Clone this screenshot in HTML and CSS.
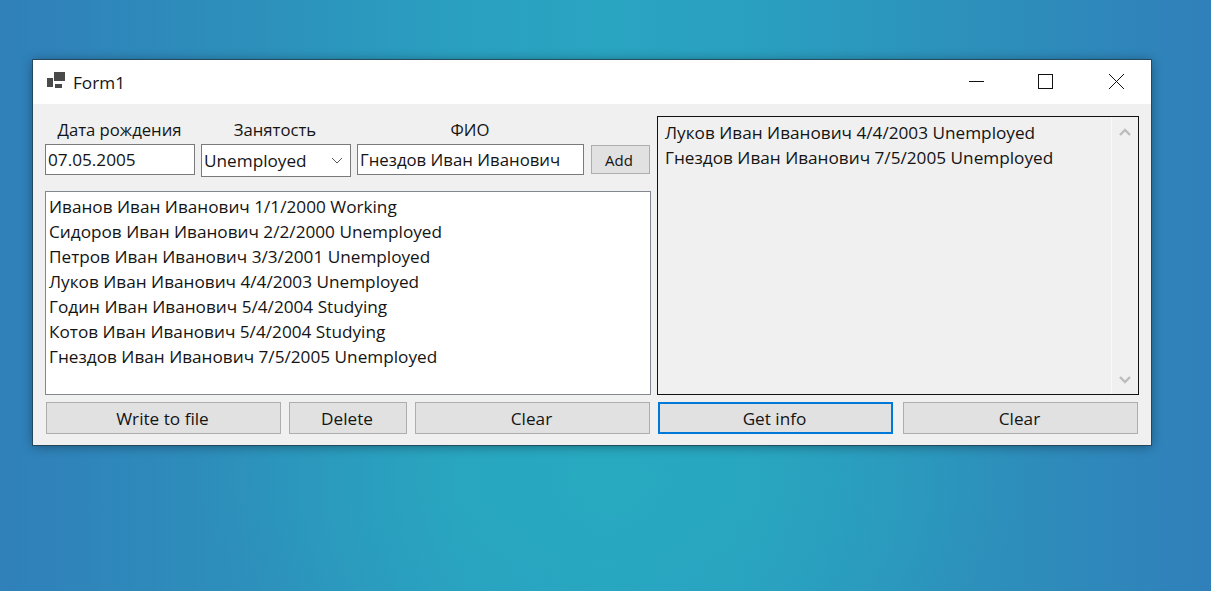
FILE: index.html
```html
<!DOCTYPE html>
<html lang="ru">
<head>
<meta charset="utf-8">
<title>Form1</title>
<link rel="stylesheet" href="styles.css">
</head>
<body>
<main class="window">
  <header class="titlebar">
    <svg class="app-icon" width="18" height="16" viewBox="0 0 18 16" aria-hidden="true">
      <rect x="7" y="0" width="11" height="9" fill="#4a4a4a"/>
      <rect x="0" y="6" width="6" height="9" fill="#4a4a4a"/>
      <rect x="8" y="12" width="7" height="4" fill="#4a4a4a"/>
    </svg>
    <span class="title">Form1</span>
    <div class="controls">
      <svg class="ctl ctl-min" width="16" height="16" viewBox="0 0 16 16" aria-hidden="true"><path d="M0 7.5H15" stroke="#111" fill="none"/></svg>
      <svg class="ctl ctl-max" width="16" height="16" viewBox="0 0 16 16" aria-hidden="true"><rect x="0.5" y="0.5" width="14" height="14" stroke="#111" fill="none"/></svg>
      <svg class="ctl ctl-close" width="16" height="16" viewBox="0 0 16 16" aria-hidden="true"><path d="M0 0L15 15M15 0L0 15" stroke="#111" fill="none"/></svg>
    </div>
  </header>
  <div class="client">
    <section class="left">
      <div class="labels">
        <span class="label label-date">Дата рождения</span>
        <span class="label label-job">Занятость</span>
        <span class="label label-name">ФИО</span>
      </div>
      <div class="inputs">
        <div class="field field-date">07.05.2005</div>
        <div class="field field-combo">Unemployed
          <svg class="chevron" width="12" height="7" viewBox="0 0 12 7" aria-hidden="true"><path d="M1 1L6 6L11 1" stroke="#555" fill="none"/></svg>
        </div>
        <div class="field field-name">Гнездов Иван Иванович</div>
        <div class="btn btn-add">Add</div>
      </div>
      <div class="list">
        <div>Иванов Иван Иванович 1/1/2000 Working</div>
        <div>Сидоров Иван Иванович 2/2/2000 Unemployed</div>
        <div>Петров Иван Иванович 3/3/2001 Unemployed</div>
        <div>Луков Иван Иванович 4/4/2003 Unemployed</div>
        <div>Годин Иван Иванович 5/4/2004 Studying</div>
        <div>Котов Иван Иванович 5/4/2004 Studying</div>
        <div>Гнездов Иван Иванович 7/5/2005 Unemployed</div>
      </div>
      <div class="actions">
        <div class="btn btn-write">Write to file</div>
        <div class="btn btn-delete">Delete</div>
        <div class="btn btn-clear">Clear</div>
      </div>
    </section>
    <section class="right">
      <div class="info">
        <div class="info-text">
          <div>Луков Иван Иванович 4/4/2003 Unemployed</div>
          <div>Гнездов Иван Иванович 7/5/2005 Unemployed</div>
        </div>
        <div class="scrollbar">
          <svg width="12" height="8" viewBox="0 0 12 8" aria-hidden="true"><path d="M1 7L6 2L11 7" stroke="#bcbcbc" stroke-width="2.4" fill="none"/></svg>
          <svg width="12" height="8" viewBox="0 0 12 8" aria-hidden="true"><path d="M1 1L6 6L11 1" stroke="#bcbcbc" stroke-width="2.4" fill="none"/></svg>
        </div>
      </div>
      <div class="actions actions-right">
        <div class="btn btn-focus">Get info</div>
        <div class="btn btn-half">Clear</div>
      </div>
    </section>
  </div>
</main>
</body>
</html>
```
FILE: styles.css
```css
html, body { height: 100%; }
body {
  margin: 0;
  overflow: hidden;
  font-family: "Open Sans", "Noto Sans", sans-serif;
  font-size: 17.2px;
  color: #141414;
  background:
    radial-gradient(ellipse 420px 200px at 610px 480px, rgba(38, 176, 192, 0.55) 0%, rgba(38, 176, 192, 0) 100%),
    linear-gradient(90deg, #3080ba 0%, #2d8fbb 20%, #2aa0c0 38%, #29a4c1 50%, #2aa0c0 62%, #2d8fbb 82%, #3080ba 100%);
  background-color: #2f80ba;
}
.window {
  width: 1118px;
  height: 385px;
  margin: 60px 0 0 33px;
  display: flex;
  flex-direction: column;
  background: #f0f0f0;
  box-shadow: 0 0 0 1px rgba(35, 60, 75, 0.75), 0 1px 11px rgba(0, 0, 0, 0.4);
}
.titlebar {
  height: 44px;
  display: flex;
  align-items: center;
  padding-left: 14px;
  background: #fff;
  flex: none;
}
.app-icon { flex: none; margin-top: -4px; }
.title { margin-left: 8px; }
.controls { margin-left: auto; display: flex; align-items: center; }
.ctl { display: block; margin-top: -1px; }
.ctl-min { margin-right: 53px; }
.ctl-max { margin-right: 55px; }
.ctl-close { margin-right: 26px; }
.client {
  flex: 1;
  display: flex;
  gap: 6px;
  padding: 12px 12px 0;
}
.left { width: 606px; display: flex; flex-direction: column; flex: none; }
.right { width: 482px; display: flex; flex-direction: column; flex: none; }
.labels { height: 28px; display: flex; align-items: center; flex: none; font-size: 16.7px; }
.label { display: block; text-align: center; line-height: 28px; white-space: nowrap; }
.label-date { width: 149px; }
.label-job { width: 110px; margin-left: 26px; }
.label-name { width: 120px; margin-left: 80px; }
.inputs { display: flex; align-items: flex-start; flex: none; height: 47px; }
.field {
  box-sizing: border-box;
  height: 31px;
  border: 1px solid #7a7a7a;
  background: #fff;
  line-height: 29px;
  padding-left: 2px;
  white-space: nowrap;
}
.field-date { width: 150px; }
.field-combo {
  width: 150px;
  height: 33px;
  margin-left: 6px;
  display: flex;
  align-items: center;
  justify-content: space-between;
  padding-right: 7px;
}
.field-name { width: 227px; margin-left: 6px; font-size: 16.8px; }
.btn {
  box-sizing: border-box;
  height: 32px;
  border: 1px solid #adadad;
  background: #e1e1e1;
  display: flex;
  align-items: center;
  justify-content: center;
  flex: none;
  padding-right: 2px;
}
.btn-add { width: 59px; height: 29px; margin: 1px 0 0 7px; font-size: 15px; padding-right: 3px; }
.list {
  box-sizing: border-box;
  height: 204px;
  flex: none;
  border: 1px solid #828790;
  background: #fff;
  padding: 2px 0 0 3px;
  line-height: 25px;
  white-space: nowrap;
}
.actions { display: flex; margin: 7px 0 0 1px; }
.btn-write { width: 235px; }
.btn-delete { width: 118px; margin-left: 8px; }
.btn-clear { width: 235px; margin-left: 8px; }
.info {
  box-sizing: border-box;
  height: 279px;
  flex: none;
  display: flex;
  justify-content: space-between;
  border: 1px solid #111;
  background: #f0f0f0;
}
.info-text { padding: 3px 0 0 7px; line-height: 25px; white-space: nowrap; }
.scrollbar {
  width: 27px;
  border-left: 1px solid #f8f8f8;
  display: flex;
  flex-direction: column;
  justify-content: space-between;
  align-items: center;
  padding: 11px 0 10px;
  box-sizing: border-box;
}
.actions-right { margin-top: 7px; }
.btn-focus { width: 235px; border: 2px solid #0078d7; }
.btn-half { width: 235px; margin-left: 10px; }
```
